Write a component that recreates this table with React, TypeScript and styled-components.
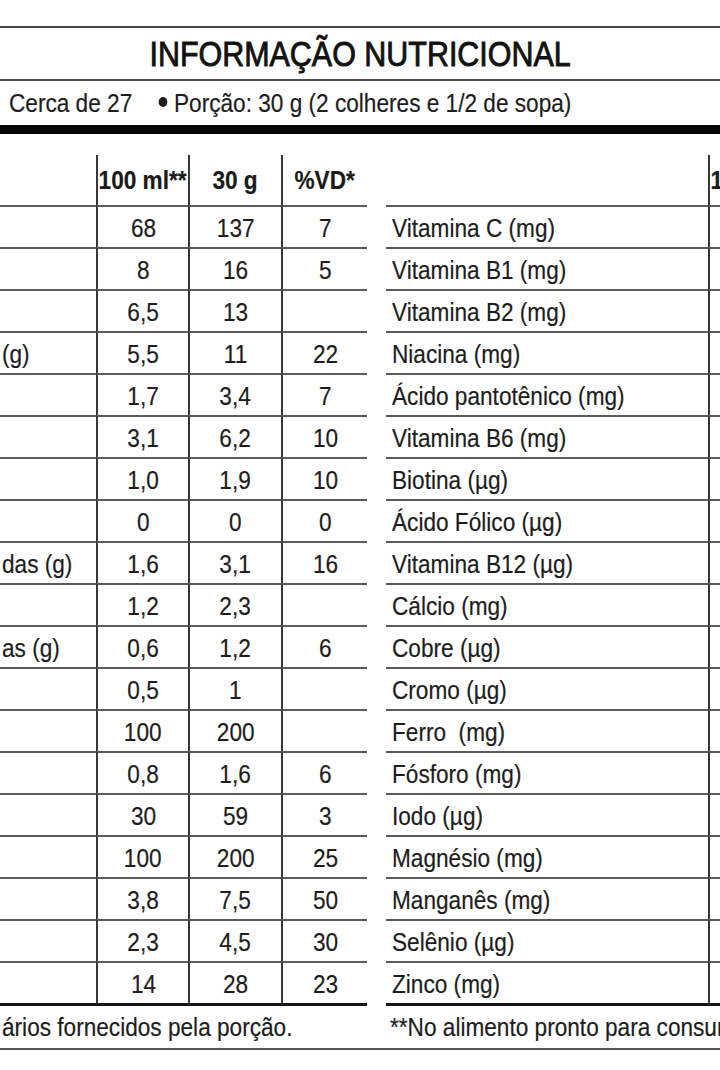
import React from "react";
import styled, { createGlobalStyle } from "styled-components";

const Global = createGlobalStyle`
  html, body { margin: 0; padding: 0; background: #ffffff; }
  body {
    overflow: hidden;
    font-family: "Liberation Sans", Arial, Helvetica, sans-serif;
    color: #1d1d1d;
  }
`;

const Page = styled.div`
  width: 720px;
  height: 1070px;
  overflow: hidden;
  padding-top: 26px;
  box-sizing: border-box;
`;

const Txt = styled.span<{ $origin?: "left" | "center" }>`
  display: inline-block;
  white-space: pre;
  transform: scaleX(0.87);
  transform-origin: ${(p) => p.$origin ?? "center"};
  -webkit-text-stroke: 0.2px currentColor;
`;

const TitleBar = styled.header`
  height: 51px;
  border-top: 2px solid #4a4a4a;
  border-bottom: 2px solid #4a4a4a;
  display: flex;
  align-items: center;
  justify-content: center;
  font-size: 35px;
  line-height: 1;
  color: #121212;
  ${Txt} {
    -webkit-text-stroke: 0.9px currentColor;
  }
`;

const ServingBar = styled.div`
  height: 44px;
  display: flex;
  align-items: center;
  padding-left: 9px;
  font-size: 26px;
  line-height: 1;
  border-bottom: 9px solid #050505;
`;

const Dot = styled.span`
  display: inline-block;
  width: 10px;
  height: 10px;
  border-radius: 50%;
  background: #1d1d1d;
  margin: 0 8px 0 30px;
  vertical-align: 0.18em;
`;

const Tables = styled.div`
  display: flex;
  gap: 19px;
  margin-top: 21px;
`;

const Table = styled.div<{ $first: number }>`
  flex: 0 0 ${(p) => p.$first + 92 + 93 + 86}px;
  display: grid;
  grid-template-columns: ${(p) => p.$first}px 92px 93px 86px;
  border-bottom: 3px solid #151515;
`;

const HeadCell = styled.div<{ $divided?: boolean }>`
  height: 50px;
  box-sizing: border-box;
  display: flex;
  align-items: center;
  justify-content: center;
  font-size: 26px;
  font-weight: 700;
  line-height: 1;
  color: #1a1a1a;
  border-left: ${(p) => (p.$divided ? "2px solid #383838" : "none")};
  overflow: hidden;
`;

const Cell = styled.div<{ $divided?: boolean; $label?: boolean; $pad?: number }>`
  height: 42px;
  box-sizing: border-box;
  display: flex;
  align-items: center;
  justify-content: ${(p) => (p.$label ? "flex-start" : "center")};
  padding-left: ${(p) => (p.$label ? p.$pad ?? 0 : 0)}px;
  padding-top: 1px;
  font-size: 26px;
  line-height: 1;
  border-top: 2px solid #5a5a5a;
  border-left: ${(p) => (p.$divided ? "2px solid #383838" : "none")};
  overflow: hidden;
`;

const Footer = styled.div`
  height: 42px;
  display: flex;
  align-items: center;
  border-bottom: 2px solid #555555;
  font-size: 26px;
  line-height: 1;
`;

const FootNote = styled.div<{ $width?: number; $pad: number }>`
  flex: ${(p) => (p.$width ? `0 0 ${p.$width}px` : "0 0 auto")};
  padding-left: ${(p) => p.$pad}px;
  box-sizing: border-box;
`;

type Row = [string, string, string, string];

const leftRows: Row[] = [
  ["", "68", "137", "7"],
  ["", "8", "16", "5"],
  ["", "6,5", "13", ""],
  ["(g)", "5,5", "11", "22"],
  ["", "1,7", "3,4", "7"],
  ["", "3,1", "6,2", "10"],
  ["", "1,0", "1,9", "10"],
  ["", "0", "0", "0"],
  ["das (g)", "1,6", "3,1", "16"],
  ["", "1,2", "2,3", ""],
  ["as (g)", "0,6", "1,2", "6"],
  ["", "0,5", "1", ""],
  ["", "100", "200", ""],
  ["", "0,8", "1,6", "6"],
  ["", "30", "59", "3"],
  ["", "100", "200", "25"],
  ["", "3,8", "7,5", "50"],
  ["", "2,3", "4,5", "30"],
  ["", "14", "28", "23"],
];

const rightLabels = [
  "Vitamina C (mg)",
  "Vitamina B1 (mg)",
  "Vitamina B2 (mg)",
  "Niacina (mg)",
  "Ácido pantotênico (mg)",
  "Vitamina B6 (mg)",
  "Biotina (µg)",
  "Ácido Fólico (µg)",
  "Vitamina B12 (µg)",
  "Cálcio (mg)",
  "Cobre (µg)",
  "Cromo (µg)",
  "Ferro  (mg)",
  "Fósforo (mg)",
  "Iodo (µg)",
  "Magnésio (mg)",
  "Manganês (mg)",
  "Selênio (µg)",
  "Zinco (mg)",
];

function Header({ labels }: { labels: string[] }) {
  return (
    <>
      <HeadCell />
      {[0, 1, 2].map((i) => (
        <HeadCell key={i} $divided>
          {labels[i] ? <Txt>{labels[i]}</Txt> : null}
        </HeadCell>
      ))}
    </>
  );
}

export default function App() {
  return (
    <>
      <Global />
      <Page>
        <TitleBar>
          <Txt>INFORMAÇÃO NUTRICIONAL</Txt>
        </TitleBar>
        <ServingBar>
          <Txt $origin="left">
            Cerca de 27<Dot />Porção: 30 g (2 colheres e 1/2 de sopa)
          </Txt>
        </ServingBar>
        <Tables>
          <Table $first={96}>
            <Header labels={["100 ml**", "30 g", "%VD*"]} />
            {leftRows.map((r, i) => (
              <React.Fragment key={i}>
                <Cell $label $pad={2}>
                  <Txt $origin="left">{r[0]}</Txt>
                </Cell>
                <Cell $divided>
                  <Txt>{r[1]}</Txt>
                </Cell>
                <Cell $divided>
                  <Txt>{r[2]}</Txt>
                </Cell>
                <Cell $divided>
                  <Txt>{r[3]}</Txt>
                </Cell>
              </React.Fragment>
            ))}
          </Table>
          <Table $first={322}>
            <Header labels={["100 ml**"]} />
            {rightLabels.map((label) => (
              <React.Fragment key={label}>
                <Cell $label $pad={6}>
                  <Txt $origin="left">{label}</Txt>
                </Cell>
                <Cell $divided />
                <Cell $divided />
                <Cell $divided />
              </React.Fragment>
            ))}
          </Table>
        </Tables>
        <Footer>
          <FootNote $width={386} $pad={2}>
            <Txt $origin="left">ários fornecidos pela porção.</Txt>
          </FootNote>
          <FootNote $pad={4}>
            <Txt $origin="left">**No alimento pronto para consumo.</Txt>
          </FootNote>
        </Footer>
      </Page>
    </>
  );
}
